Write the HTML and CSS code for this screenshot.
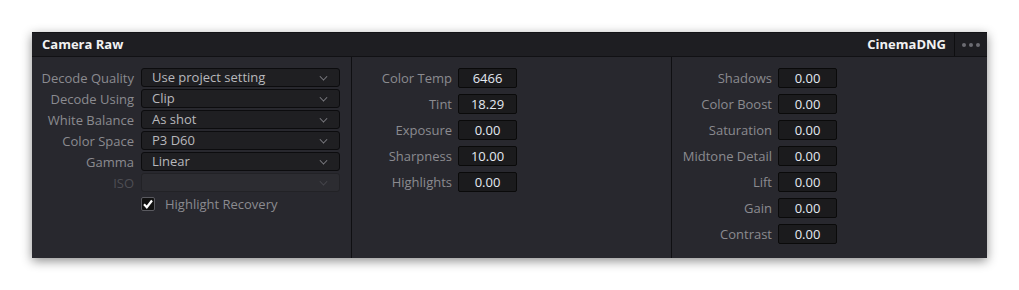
FILE: index.html
```html
<!DOCTYPE html>
<html lang="en">
<head>
    <meta charset="UTF-8">
    <title>Camera Raw</title>
    <link rel="stylesheet" href="styles.css">
</head>
<body>
<div class="panel">
    <div class="header">
        <span class="title">Camera Raw</span>
        <div class="header-right">
            <span class="format">CinemaDNG</span>
            <div class="menu">
                <span class="dot"></span><span class="dot"></span><span class="dot"></span>
            </div>
        </div>
    </div>
    <div class="body">
        <div class="col col-left">
            <div class="row">
                <span class="label">Decode Quality</span>
                <div class="select">Use project setting<span class="chev"></span></div>
            </div>
            <div class="row">
                <span class="label">Decode Using</span>
                <div class="select">Clip<span class="chev"></span></div>
            </div>
            <div class="row">
                <span class="label">White Balance</span>
                <div class="select">As shot<span class="chev"></span></div>
            </div>
            <div class="row">
                <span class="label">Color Space</span>
                <div class="select">P3 D60<span class="chev"></span></div>
            </div>
            <div class="row">
                <span class="label">Gamma</span>
                <div class="select">Linear<span class="chev"></span></div>
            </div>
            <div class="row disabled">
                <span class="label">ISO</span>
                <div class="select"><span class="chev"></span></div>
            </div>
            <div class="row check-row">
                <span class="label"></span>
                <label class="check">
                    <span class="box">
                        <svg width="12" height="12" viewBox="0 0 12 12"><path d="M2 6.3 L4.8 9.2 L10 2.5" fill="none" stroke="#fff" stroke-width="2.2"/></svg>
                    </span>
                    Highlight Recovery
                </label>
            </div>
        </div>
        <div class="col col-num">
            <div class="field"><span class="label">Color Temp</span><span class="value">6466</span></div>
            <div class="field"><span class="label">Tint</span><span class="value">18.29</span></div>
            <div class="field"><span class="label">Exposure</span><span class="value">0.00</span></div>
            <div class="field"><span class="label">Sharpness</span><span class="value">10.00</span></div>
            <div class="field"><span class="label">Highlights</span><span class="value">0.00</span></div>
        </div>
        <div class="col col-num last">
            <div class="field"><span class="label">Shadows</span><span class="value">0.00</span></div>
            <div class="field"><span class="label">Color Boost</span><span class="value">0.00</span></div>
            <div class="field"><span class="label">Saturation</span><span class="value">0.00</span></div>
            <div class="field"><span class="label">Midtone Detail</span><span class="value">0.00</span></div>
            <div class="field"><span class="label">Lift</span><span class="value">0.00</span></div>
            <div class="field"><span class="label">Gain</span><span class="value">0.00</span></div>
            <div class="field"><span class="label">Contrast</span><span class="value">0.00</span></div>
        </div>
    </div>
</div>
</body>
</html>
```

FILE: styles.css
```css
* {
    box-sizing: border-box;
}
body {
    margin: 0;
    padding: 32px;
    background-color: #fff;
    font-family: "Open Sans", "Noto Sans", sans-serif;
    font-size: 13px;
}
.panel {
    width: 955px;
    height: 226px;
    background-color: #28282e;
    box-shadow: 0 3px 10px rgba(0, 0, 0, 0.45);
    display: flex;
    flex-direction: column;
}
.header {
    height: 25px;
    background-color: #1e1e22;
    border-top: 1px solid #131316;
    border-bottom: 1px solid #111114;
    display: flex;
    align-items: stretch;
    justify-content: space-between;
}
.title {
    color: #f2f2f2;
    font-weight: bold;
    padding-left: 10px;
    line-height: 23px;
}
.header-right {
    display: flex;
    align-items: stretch;
}
.format {
    color: #f2f2f2;
    font-weight: bold;
    line-height: 23px;
    padding-right: 8px;
    border-right: 1px solid #0e0e10;
}
.menu {
    width: 32px;
    display: flex;
    align-items: center;
    justify-content: center;
    gap: 3px;
}
.dot {
    width: 4px;
    height: 4px;
    border-radius: 50%;
    background-color: #6c6c72;
}
.body {
    flex: 1;
    display: flex;
}
.col {
    border-right: 1px solid #0f0f12;
    padding-top: 11px;
}
.col-left {
    width: 320px;
    display: flex;
    flex-direction: column;
    gap: 2px;
}
.col-num {
    width: 320px;
    display: flex;
    flex-direction: column;
    gap: 6px;
}
.col.last {
    border-right: none;
    flex: 1;
}
.row {
    display: flex;
    align-items: center;
    height: 19px;
}
.label {
    width: 109px;
    flex-shrink: 0;
    text-align: right;
    padding-right: 7px;
    color: #8b8b90;
    white-space: nowrap;
}
.select {
    width: 199px;
    height: 19px;
    background-color: #1f1f22;
    border: 1px solid #0c0c0e;
    border-radius: 3px;
    color: #b8b8bc;
    padding-left: 10px;
    line-height: 17px;
    position: relative;
}
.chev {
    position: absolute;
    right: 12px;
    top: 4px;
    width: 7px;
    height: 7px;
    border-right: 1.5px solid #8a8a8f;
    border-bottom: 1.5px solid #8a8a8f;
    transform: rotate(45deg) scale(0.8);
}
.disabled .label {
    color: #4e4e54;
}
.disabled .select {
    background-color: #2c2c31;
    border-color: #222226;
}
.disabled .chev {
    border-color: #4a4a50;
}
.check-row {
    height: 18px;
    margin-top: 1px;
}
.check {
    display: flex;
    align-items: center;
    gap: 10px;
    color: #8b8b90;
}
.box {
    width: 14px;
    height: 14px;
    background-color: #111;
    border: 1px solid #5a5a60;
    border-radius: 2px;
    display: flex;
    align-items: center;
    justify-content: center;
}
.field {
    display: flex;
    align-items: center;
    height: 20px;
}
.field .label {
    width: 106px;
    padding-right: 6px;
}
.value {
    width: 59px;
    height: 20px;
    background-color: #1b1b1d;
    border: 1px solid #0a0a0a;
    border-radius: 2px;
    color: #e4e9f1;
    text-align: center;
    line-height: 18px;
}
```
